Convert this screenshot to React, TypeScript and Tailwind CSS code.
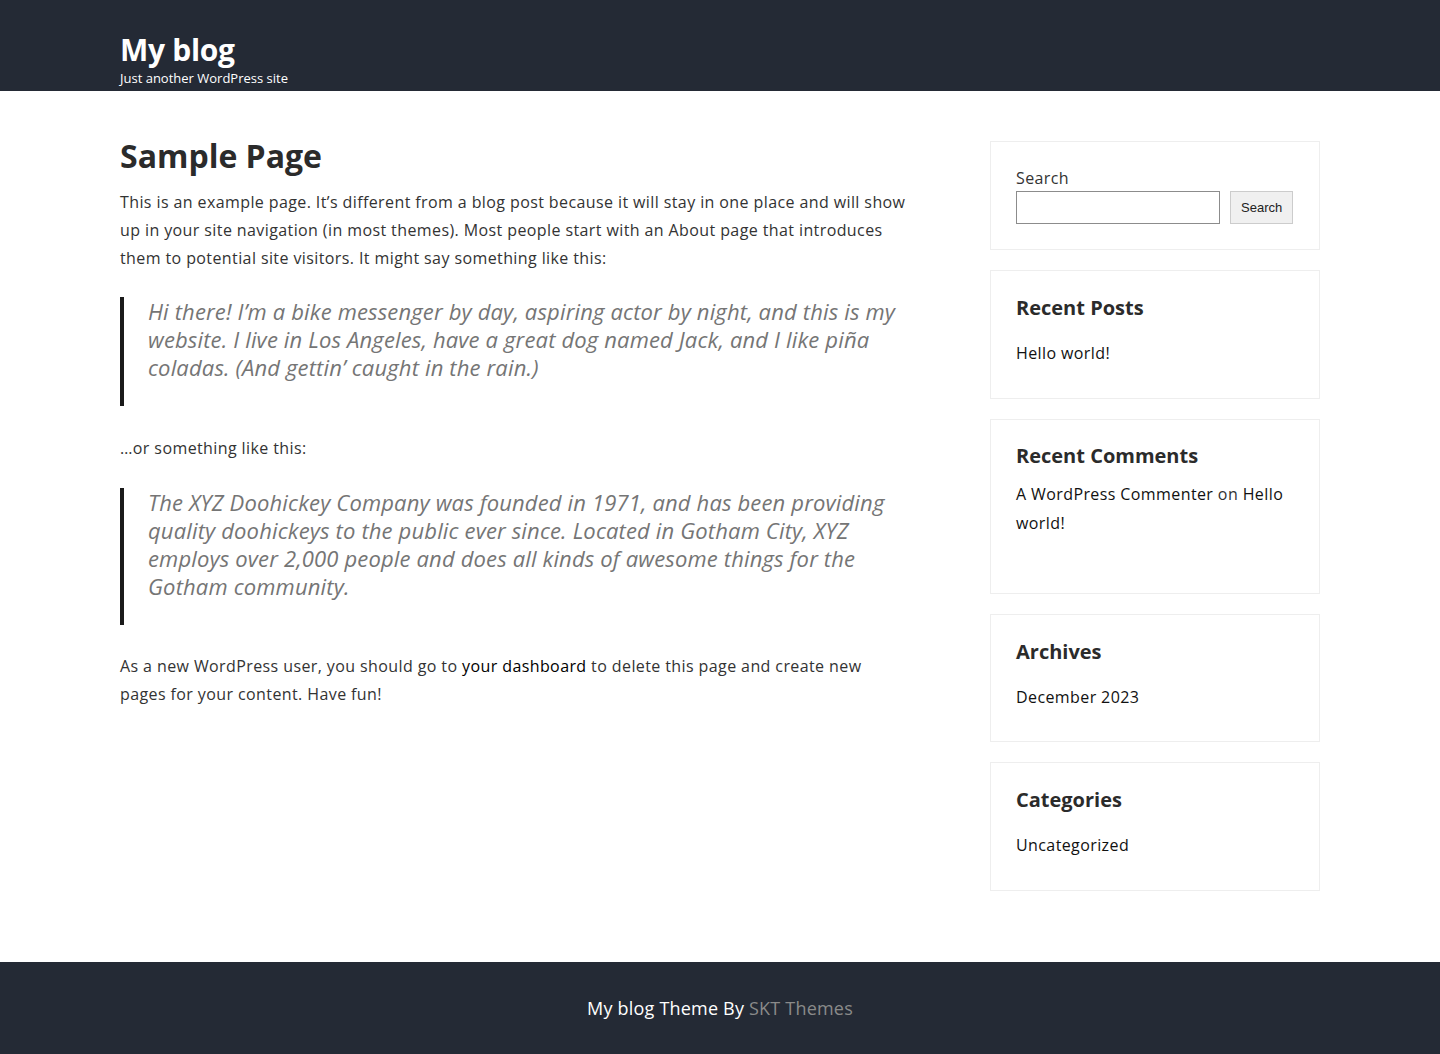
export default function App() {
  const font = { fontFamily: '"Open Sans", "Liberation Sans", sans-serif' }

  return (
    <div className="min-h-[1054px] bg-white flex flex-col text-[#333333]" style={font}>
      <header className="bg-[#242a35] h-[91px]">
        <div className="w-[1200px] mx-auto pt-[32px]">
          <h1 className="text-[30px] leading-[36px] font-bold text-white tracking-[-0.3px]">My blog</h1>
          <p className="text-[13px] leading-[18px] text-white mt-[1px]">Just another WordPress site</p>
        </div>
      </header>

      <main className="w-[1200px] mx-auto flex justify-between pt-[50px] pb-[70px] flex-1">
        <article className="w-[790px] tracking-[0.4px]">
          <h2 className="text-[32px] leading-[40px] font-bold text-[#2b2b2b] mt-[-5px] tracking-normal">Sample Page</h2>
          <p className="text-[16px] leading-[28px] mt-[12px]">
            This is an example page. It’s different from a blog post because it will stay in one place and will show up in your site navigation (in most themes). Most people start with an About page that introduces them to potential site visitors. It might say something like this:
          </p>
          <blockquote className="border-l-4 border-[#1a1a1a] pl-[24px] pb-[25px] mt-[25px] text-[22px] leading-[28px] italic text-[#757575] tracking-[0.15px]">
            Hi there! I’m a bike messenger by day, aspiring actor by night, and this is my website. I live in Los Angeles, have a great dog named Jack, and I like piña coladas. (And gettin’ caught in the rain.)
          </blockquote>
          <p className="text-[16px] leading-[28px] mt-[28px]">…or something like this:</p>
          <blockquote className="border-l-4 border-[#1a1a1a] pl-[24px] pb-[25px] mt-[26px] text-[22px] leading-[28px] italic text-[#757575] tracking-[0.15px]">
            The XYZ Doohickey Company was founded in 1971, and has been providing quality doohickeys to the public ever since. Located in Gotham City, XYZ employs over 2,000 people and does all kinds of awesome things for the Gotham community.
          </blockquote>
          <p className="text-[16px] leading-[28px] mt-[27px]">
            As a new WordPress user, you should go to <a className="text-black">your dashboard</a> to delete this page and create new pages for your content. Have fun!
          </p>
        </article>

        <aside className="w-[330px] flex flex-col gap-[20px] tracking-[0.4px]">
          <section className="border border-[#eeeeee] px-[25px] pt-[24px] pb-[25px]">
            <label className="block text-[16px] leading-[24px]">Search</label>
            <div className="flex items-center gap-[10px] mt-[1px]">
              <input className="w-[204px] h-[33px] border border-[#8c8c8c] bg-white" />
              <button
                className="h-[33px] px-[10px] border border-[#cccccc] bg-[#f0f0f0] text-[13px] text-[#222222] tracking-normal"
                style={{ fontFamily: '"Liberation Sans", Arial, sans-serif' }}
              >
                Search
              </button>
            </div>
          </section>

          <section className="border border-[#eeeeee] px-[25px] pt-[25px] pb-[31px]">
            <h3 className="text-[20px] leading-[24px] font-bold text-[#2b2b2b] tracking-normal">Recent Posts</h3>
            <p className="text-[16px] leading-[28px] mt-[19px] text-[#111111]">Hello world!</p>
          </section>

          <section className="border border-[#eeeeee] px-[25px] pt-[24px] pb-[55px]">
            <h3 className="text-[20px] leading-[24px] font-bold text-[#2b2b2b] tracking-normal">Recent Comments</h3>
            <p className="text-[16px] leading-[29px] mt-[12px] text-[#333333]">
              <a className="text-[#111111]">A WordPress Commenter</a> on <a className="text-[#111111]">Hello world!</a>
            </p>
          </section>

          <section className="border border-[#eeeeee] px-[25px] pt-[25px] pb-[30px]">
            <h3 className="text-[20px] leading-[24px] font-bold text-[#2b2b2b] tracking-normal">Archives</h3>
            <p className="text-[16px] leading-[28px] mt-[19px] text-[#111111]">December 2023</p>
          </section>

          <section className="border border-[#eeeeee] px-[25px] pt-[25px] pb-[31px]">
            <h3 className="text-[20px] leading-[24px] font-bold text-[#2b2b2b] tracking-normal">Categories</h3>
            <p className="text-[16px] leading-[28px] mt-[19px] text-[#111111]">Uncategorized</p>
          </section>
        </aside>
      </main>

      <footer className="bg-[#242a35] h-[92px] flex items-center justify-center">
        <p className="text-[18px] text-white tracking-[0.2px]">
          My blog Theme By <a className="text-[#8a8a8a]">SKT Themes</a>
        </p>
      </footer>
    </div>
  )
}
